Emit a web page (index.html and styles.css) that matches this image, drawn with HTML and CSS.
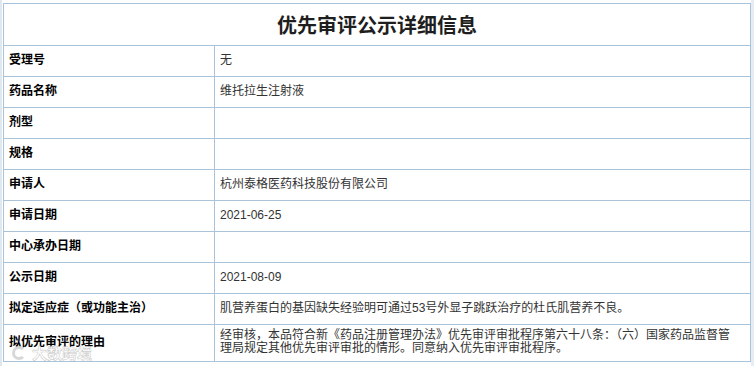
FILE: index.html
```html
<!DOCTYPE html>
<html lang="zh-CN">
<head>
<meta charset="utf-8">
<title>优先审评公示详细信息</title>
<link rel="stylesheet" href="styles.css">
</head>
<body>
<div class="page">
  <table class="info">
    <colgroup>
      <col class="col-label">
      <col class="col-value">
    </colgroup>
    <tr class="title-row"><th colspan="2">优先审评公示详细信息</th></tr>
    <tr><td class="label">受理号</td><td class="value">无</td></tr>
    <tr><td class="label">药品名称</td><td class="value">维托拉生注射液</td></tr>
    <tr><td class="label">剂型</td><td class="value"></td></tr>
    <tr><td class="label">规格</td><td class="value"></td></tr>
    <tr><td class="label">申请人</td><td class="value">杭州泰格医药科技股份有限公司</td></tr>
    <tr><td class="label">申请日期</td><td class="value">2021-06-25</td></tr>
    <tr><td class="label">中心承办日期</td><td class="value"></td></tr>
    <tr><td class="label">公示日期</td><td class="value">2021-08-09</td></tr>
    <tr><td class="label">拟定适应症（或功能主治）</td><td class="value">肌营养蛋白的基因缺失经验明可通过53号外显子跳跃治疗的杜氏肌营养不良。</td></tr>
    <tr class="tall"><td class="label">拟优先审评的理由</td><td class="value">经审核，本品符合新《药品注册管理办法》优先审评审批程序第六十八条：（六）国家药品监督管理局规定其他优先审评审批的情形。同意纳入优先审评审批程序。</td></tr>
  </table>
  <div class="watermark"><span class="wm-logo"></span>大数跨境</div>
</div>
</body>
</html>
```
FILE: styles.css
```css
html, body {
  margin: 0;
  padding: 0;
  background: #ffffff;
}
body {
  width: 754px;
  height: 366px;
  overflow: hidden;
  font-family: "Liberation Sans", "Noto Sans CJK SC", sans-serif;
}
.page {
  position: relative;
  padding: 3px 1px 0 3px;
  background: linear-gradient(to right, #dfe7ef 0, #dfe7ef 2px, #ffffff 2px, #ffffff 751px, #e6ecf3 751px);
  height: 363px;
}
.info {
  width: 748px;
  border-collapse: collapse;
  table-layout: fixed;
  background: #ffffff;
}
.col-label { width: 211px; }
.info th,
.info td {
  border: 1px solid #a8c3da;
}
.title-row th {
  height: 41px;
  padding: 0;
  font-family: "Noto Sans CJK SC", sans-serif;
  font-size: 20px;
  font-weight: 700;
  color: #1e1e1e;
  text-align: center;
  vertical-align: middle;
  line-height: 24px;
}
.info td {
  height: 31px;
  padding: 0 5px 2px;
  box-sizing: border-box;
  font-size: 12px;
  line-height: 14px;
  vertical-align: middle;
}
.info td.label {
  font-weight: 700;
  color: #000000;
}
.info td.value {
  padding-right: 12px;
  color: #333333;
}
.info tr.tall td {
  padding-top: 4px;
  padding-bottom: 6px;
  line-height: 13px;
}
.watermark {
  position: absolute;
  left: 12px;
  top: 344px;
  display: flex;
  align-items: center;
  gap: 6px;
  font-family: "Noto Sans CJK SC", sans-serif;
  font-size: 15px;
  line-height: 18px;
  font-weight: 700;
  color: rgba(255, 255, 255, 0.75);
  -webkit-text-stroke: 0.6px rgba(160, 160, 160, 0.55);
  pointer-events: none;
}
.wm-logo {
  width: 14px;
  height: 14px;
  border-radius: 50%;
  border: 3px solid rgba(190, 190, 190, 0.6);
  border-right-color: transparent;
  box-sizing: border-box;
}
```
